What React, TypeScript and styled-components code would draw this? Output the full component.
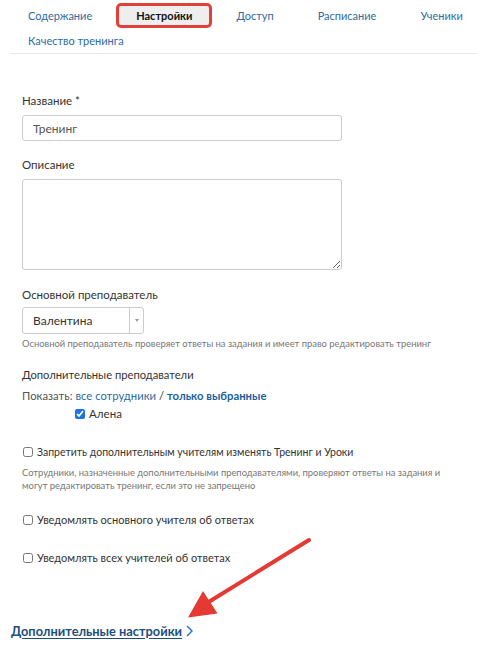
import React from "react";
import styled, { createGlobalStyle } from "styled-components";

const Global = createGlobalStyle`
  html, body { margin: 0; padding: 0; background: #fff; overflow-x: hidden; }
  body { font-family: Lato, "Liberation Sans", Arial, sans-serif; color: #333; }
  * { box-sizing: border-box; }
`;

const Page = styled.div`
  position: relative;
  width: 477px;
  min-height: 647px;
  padding: 0 0 0 11px;
`;

const TabBar = styled.nav`
  padding-top: 3px;
  border-bottom: 1px solid #e6e6e6;
`;

const TabRow = styled.div`
  display: flex;
  flex-wrap: nowrap;
  gap: 4px;
  margin-left: -3px;
  white-space: nowrap;
`;

const Tab = styled.a<{ $active?: boolean }>`
  display: block;
  height: 25px;
  line-height: 20px;
  padding: 0 17px;
  border: 3px solid ${(p) => (p.$active ? "#e2403a" : "transparent")};
  border-radius: 5px;
  background: ${(p) => (p.$active ? "#eeeeee" : "transparent")};
  color: ${(p) => (p.$active ? "#111" : "#2f6aa0")};
  font-weight: ${(p) => (p.$active ? 700 : 400)};
  font-size: 11px;
  text-decoration: none;
  cursor: pointer;
`;

const Form = styled.form`
  padding: 39px 11px 0 11px;
`;

const Field = styled.div<{ $mb?: number }>`
  margin-bottom: ${(p) => p.$mb ?? 16}px;
`;

const Label = styled.label<{ $mb?: number; $size?: number }>`
  display: block;
  font-size: ${(p) => p.$size ?? 11.5}px;
  line-height: 16px;
  color: #333;
  margin-bottom: ${(p) => p.$mb ?? 6}px;
`;

const TextInput = styled.input`
  display: block;
  width: 320px;
  height: 26px;
  border: 1px solid #cccccc;
  border-radius: 3px;
  padding: 0 10px;
  font-family: inherit;
  font-size: 12px;
  color: #555;
  outline: none;
`;

const TextArea = styled.textarea`
  display: block;
  width: 320px;
  height: 91px;
  border: 1px solid #cccccc;
  border-radius: 3px;
  padding: 6px 10px;
  font-family: inherit;
  font-size: 12px;
  outline: none;
`;

const Select = styled.div`
  display: flex;
  width: 122px;
  height: 27px;
  border: 1px solid #cccccc;
  border-radius: 3px;
  background: #fff;
`;

const SelectValue = styled.span`
  flex: 1;
  padding-left: 10px;
  line-height: 25px;
  font-size: 12px;
  color: #333;
`;

const SelectCaret = styled.span`
  width: 14px;
  border-left: 1px solid #cccccc;
  display: flex;
  align-items: center;
  justify-content: center;
`;

const Caret = styled.span`
  width: 0;
  height: 0;
  border-left: 2.5px solid transparent;
  border-right: 2.5px solid transparent;
  border-top: 3px solid #999;
`;

const Help = styled.p<{ $mt?: number }>`
  margin: ${(p) => p.$mt ?? 3}px 0 0;
  font-size: 9.4px;
  line-height: 13.5px;
  color: #777;
  max-width: 436px;
`;

const Section = styled.div<{ $mt?: number }>`
  margin-top: ${(p) => p.$mt ?? 0}px;
`;

const ShowLine = styled.div`
  font-size: 11.3px;
  line-height: 16px;
  color: #555;
  margin-top: 5px;
`;

const LinkText = styled.a<{ $bold?: boolean }>`
  color: ${(p) => (p.$bold ? "#1c5f9f" : "#2f6aa0")};
  font-weight: ${(p) => (p.$bold ? 700 : 400)};
  text-decoration: none;
  cursor: pointer;
`;

const Slash = styled.span`
  color: #333;
`;

const CheckRow = styled.label<{ $indent?: number; $mt?: number; $size?: number }>`
  display: flex;
  align-items: center;
  gap: 4px;
  height: 16px;
  padding-left: ${(p) => p.$indent ?? 1}px;
  margin-top: ${(p) => p.$mt ?? 0}px;
  font-size: ${(p) => p.$size ?? 11}px;
  color: #333;
`;

const Check = styled.input.attrs({ type: "checkbox" })`
  width: 10px;
  height: 10px;
  margin: 0;
  accent-color: #1f73e0;
`;

const MoreLink = styled.a`
  display: inline-flex;
  align-items: center;
  gap: 4px;
  margin-top: 57px;
  font-size: 12.8px;
  line-height: 16px;
  font-weight: 700;
  color: #1d4e7c;
  cursor: pointer;
`;

const MoreText = styled.span`
  text-decoration: underline;
  text-underline-offset: 2px;
`;

const Annotation = styled.svg`
  position: absolute;
  left: 0;
  top: 0;
  pointer-events: none;
`;

export default function App() {
  return (
    <>
      <Global />
      <Page>
        <TabBar>
          <TabRow>
            <Tab>Содержание</Tab>
            <Tab $active>Настройки</Tab>
            <Tab>Доступ</Tab>
            <Tab>Расписание</Tab>
            <Tab>Ученики</Tab>
          </TabRow>
          <TabRow>
            <Tab>Качество тренинга</Tab>
          </TabRow>
        </TabBar>

        <Form onSubmit={(e) => e.preventDefault()}>
          <Field>
            <Label>Название *</Label>
            <TextInput defaultValue="Тренинг" />
          </Field>
          <Field $mb={17}>
            <Label>Описание</Label>
            <TextArea />
          </Field>
          <Field $mb={0}>
            <Label $mb={4}>Основной преподаватель</Label>
            <Select>
              <SelectValue>Валентина</SelectValue>
              <SelectCaret>
                <Caret />
              </SelectCaret>
            </Select>
            <Help>
              Основной преподаватель проверяет ответы на задания и имеет право
              редактировать тренинг
            </Help>
          </Field>

          <Section $mt={16}>
            <Label $mb={0} $size={11.2}>
              Дополнительные преподаватели
            </Label>
            <ShowLine>
              Показать: <LinkText>все сотрудники</LinkText> <Slash>/</Slash>{" "}
              <LinkText $bold>только выбранные</LinkText>
            </ShowLine>
            <CheckRow $indent={53} $mt={2} $size={11.5}>
              <Check defaultChecked />
              Алена
            </CheckRow>
          </Section>

          <Section $mt={22}>
            <CheckRow $size={10.5}>
              <Check />
              Запретить дополнительным учителям изменять Тренинг и Уроки
            </CheckRow>
            <Help $mt={6}>
              Сотрудники, назначенные дополнительными преподавателями, проверяют
              ответы на задания и могут редактировать тренинг, если это не
              запрещено
            </Help>
          </Section>

          <CheckRow $mt={19}>
            <Check />
            Уведомлять основного учителя об ответах
          </CheckRow>
          <CheckRow $mt={22}>
            <Check />
            Уведомлять всех учителей об ответах
          </CheckRow>
        </Form>

        <MoreLink>
          <MoreText>Дополнительные настройки</MoreText>
          <svg width="7" height="12" viewBox="0 0 7 12">
            <polyline
              points="1,1 6,6 1,11"
              fill="none"
              stroke="#1f73c4"
              strokeWidth="1.4"
            />
          </svg>
        </MoreLink>

        <Annotation width="477" height="647" viewBox="0 0 477 647">
          <line
            x1="309"
            y1="540"
            x2="207"
            y2="603"
            stroke="#e53a33"
            strokeWidth="4"
            strokeLinecap="round"
          />
          <polygon points="188,617.5 203,591 217.5,613.5" fill="#e53a33" />
        </Annotation>
      </Page>
    </>
  );
}
